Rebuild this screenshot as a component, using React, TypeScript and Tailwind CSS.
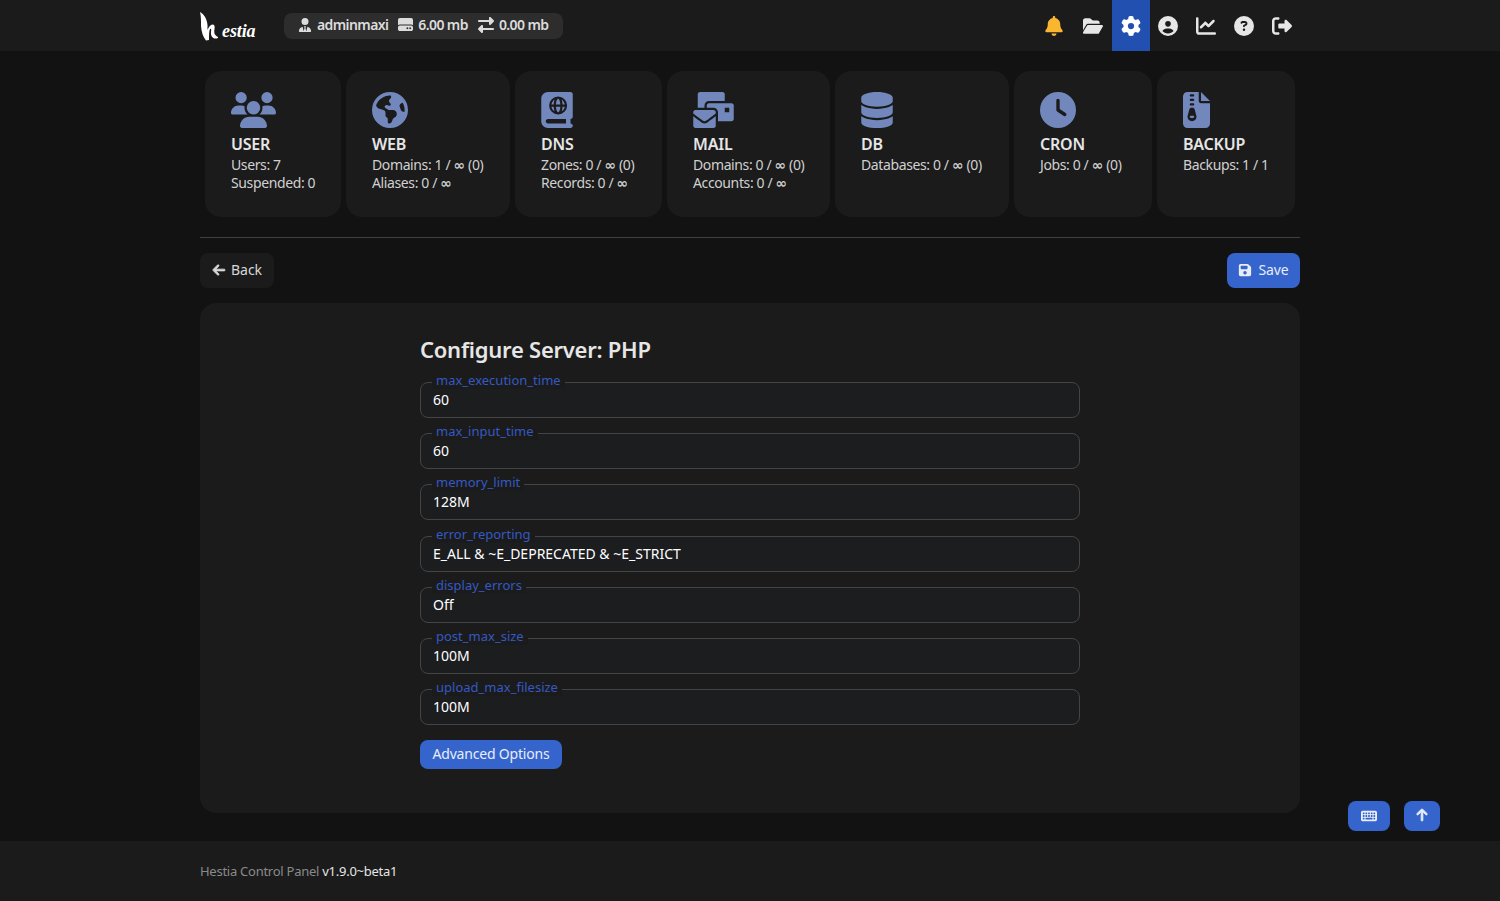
import {
  FaArrowLeft,
  FaArrowUp,
  FaBell,
  FaBookAtlas,
  FaChartLine,
  FaCircleQuestion,
  FaCircleUser,
  FaClock,
  FaDatabase,
  FaEarthAmericas,
  FaFileZipper,
  FaFloppyDisk,
  FaFolderOpen,
  FaGear,
  FaHardDrive,
  FaKeyboard,
  FaRightFromBracket,
  FaRightLeft,
  FaUsers,
  FaUserTie,
} from "react-icons/fa6";
import { FaMailBulk } from "react-icons/fa";

const stats = [
  { w: "w-[136px]", iw: "w-[45px]", icon: FaUsers, title: "USER", lines: ["Users: 7", "Suspended: 0"] },
  { w: "w-[164px]", iw: "w-[36px]", icon: FaEarthAmericas, title: "WEB", lines: ["Domains: 1 / ∞ (0)", "Aliases: 0 / ∞"] },
  { w: "w-[147px]", iw: "w-[32px]", icon: FaBookAtlas, title: "DNS", lines: ["Zones: 0 / ∞ (0)", "Records: 0 / ∞"] },
  { w: "w-[163px]", iw: "w-[41px]", icon: FaMailBulk, title: "MAIL", lines: ["Domains: 0 / ∞ (0)", "Accounts: 0 / ∞"] },
  { w: "w-[174px]", iw: "w-[32px]", icon: FaDatabase, title: "DB", lines: ["Databases: 0 / ∞ (0)"] },
  { w: "w-[138px]", iw: "w-[36px]", icon: FaClock, title: "CRON", lines: ["Jobs: 0 / ∞ (0)"] },
  { w: "w-[138px]", iw: "w-[27px]", icon: FaFileZipper, title: "BACKUP", lines: ["Backups: 1 / 1"] },
];

const fields = [
  ["max_execution_time", "60"],
  ["max_input_time", "60"],
  ["memory_limit", "128M"],
  ["error_reporting", "E_ALL & ~E_DEPRECATED & ~E_STRICT"],
  ["display_errors", "Off"],
  ["post_max_size", "100M"],
  ["upload_max_filesize", "100M"],
];

const menu = [
  { icon: FaBell, cls: "pr-[2px] text-[#fbb62f]" },
  { icon: FaFolderOpen, cls: "pr-[1px] text-[#e6e6e6]" },
  { icon: FaGear, cls: "text-white bg-[#2250b0]" },
  { icon: FaCircleUser, cls: "pr-[2px] text-[#e6e6e6]" },
  { icon: FaChartLine, cls: "pr-[2px] text-[#e6e6e6]" },
  { icon: FaCircleQuestion, cls: "pr-[2px] text-[#e6e6e6]" },
  { icon: FaRightFromBracket, cls: "pr-[2px] text-[#e6e6e6]" },
];

function Logo() {
  return (
    <div className="flex h-[30px] w-[56px] items-end">
      <svg viewBox="0 0 24 30" className="h-[30px] w-[24px] shrink-0 fill-white">
        <path d="M0 1C4 3 7 8 7.5 14L7.5 19C8.5 16 10.5 13.5 12.5 13.5C14.5 13.5 15 15 14.5 18C14 21 14 24 18 26L18 27C13 29 10.5 25 11 21C11.5 18 11 17 10 18C9 20 9 24 9 29L6 29.5C3 26 1.5 21 1 15C1 9 1 5 0 1z" />
      </svg>
      <span className="-ml-[2px] mb-[1px] font-['Liberation_Serif',serif] text-[18px] font-bold italic leading-none tracking-[-0.1px] text-white">
        estia
      </span>
    </div>
  );
}

// the infinity glyph is small in Noto, DejaVu has a wider one
function StatLine({ text }: { text: string }) {
  const parts = text.split("∞");
  return (
    <div className="h-[18px] text-[14px] leading-[18px] tracking-[-0.38px] text-[#d0d0d0]">
      {parts[0]}
      {parts.length > 1 && <span className="font-['DejaVu_Sans',sans-serif] font-bold leading-[14px]">∞</span>}
      {parts[1]}
    </div>
  );
}

export default function App() {
  return (
    <div className="flex min-h-[901px] flex-col bg-[#121212] font-['Noto_Sans',sans-serif] text-[14px] text-[#e6e6e6]">
      <header className="h-[51px] bg-[#1b1b1b]">
        <div className="mx-auto flex h-full w-[1100px] items-center">
          <Logo />
          <div className="ml-[28px] flex h-[26px] w-[279px] items-center gap-[10px] rounded-lg bg-[#2d2d2e] pb-[2px] pl-[14px] text-[14px] font-semibold tracking-[-0.6px] text-[#dcdcdc]">
            <span className="flex items-center gap-[5px]"><FaUserTie size={14} />adminmaxi</span>
            <span className="flex items-center gap-[5px]"><FaHardDrive size={15} />6.00 mb</span>
            <span className="flex items-center gap-[5px]"><FaRightLeft size={16} />0.00 mb</span>
          </div>
          <nav className="-mr-[2px] ml-auto flex h-full">
            {menu.map(({ icon: Icon, cls }, i) => (
              <div key={i} className={`flex h-full w-[38px] items-center justify-center ${cls}`}>
                <Icon size={20} />
              </div>
            ))}
          </nav>
        </div>
      </header>

      <main className="mx-auto w-[1100px] flex-1">
        <div className="flex justify-center gap-[5px] pt-[20px]">
          {stats.map(({ w, iw, icon: Icon, title, lines }) => (
            <div key={title} className={`${w} h-[146px] rounded-2xl bg-[#1b1b1b] pl-[26px] pt-[21px]`}>
              <Icon className={`h-[36px] ${iw} text-[#7288bd]`} />
              <div className="mt-[5px] text-[16px] font-semibold leading-[22px] tracking-[-0.2px] text-[#e6e6e6]">{title}</div>
              <div className="mt-[1px]">
                {lines.map((l) => (
                  <StatLine key={l} text={l} />
                ))}
              </div>
            </div>
          ))}
        </div>

        <div className="mt-[20px] border-t border-[#3f3f3f]" />

        <div className="mt-[15px] flex items-center justify-between">
          <button className="flex h-[35px] w-[74px] items-center justify-center gap-[5px] rounded-lg bg-[#1b1b1b] pb-[2px] text-[#d8d8d8]">
            <FaArrowLeft size={14} stroke="currentColor" strokeWidth={30} />Back
          </button>
          <button className="flex h-[35px] w-[73px] items-center justify-center gap-[6px] rounded-lg bg-[#3565cc] pb-[2px] tracking-[-0.1px] text-[#e8edf8]">
            <FaFloppyDisk size={14} />Save
          </button>
        </div>

        <section className="mt-[15px] h-[510px] rounded-2xl bg-[#1b1b1b] pt-[30px]">
          <div className="mx-auto w-[660px]">
            <h1 className="text-[22px] font-semibold leading-[32px] tracking-[-0.25px] text-[#e6e6e6]">Configure Server: PHP</h1>
            <div className="mt-[17px] flex flex-col gap-[15.2px]">
              {fields.map(([name, value]) => (
                <div key={name} className="relative flex h-[36px] items-center rounded-lg border border-[#444] bg-[#1c1d1f] px-[12px] text-white">
                  <span className="absolute -top-[12px] left-[11px] bg-[#1b1b1b] px-[4px] text-[13px] leading-[18px] text-[#3459c4]">{name}</span>
                  <span className="pb-[0.8px]">{value}</span>
                </div>
              ))}
            </div>
            <button className="mt-[15px] flex h-[29px] w-[142px] items-center justify-center rounded-lg bg-[#3565cc] pb-[2px] tracking-[-0.2px] text-[#e8edf8]">
              Advanced Options
            </button>
          </div>
        </section>
      </main>

      <footer className="mt-[28px] flex h-[60px] items-center bg-[#1b1b1b] pt-[2px]">
        <div className="mx-auto w-[1100px] text-[13px] tracking-[-0.26px] text-[#8a8a8a]">
          Hestia Control Panel <span className="text-[#e6e6e6]">v1.9.0~beta1</span>
        </div>
      </footer>

      <div className="fixed bottom-[70px] right-[60px] flex gap-[14px]">
        <button className="flex h-[30px] w-[42px] items-center justify-center rounded-lg bg-[#3565cc] text-[#e8edf8]"><FaKeyboard size={16} /></button>
        <button className="flex h-[30px] w-[36px] items-center justify-center rounded-lg bg-[#3565cc] pb-[2px] text-[#e8edf8]"><FaArrowUp size={14} stroke="currentColor" strokeWidth={30} /></button>
      </div>
    </div>
  );
}
